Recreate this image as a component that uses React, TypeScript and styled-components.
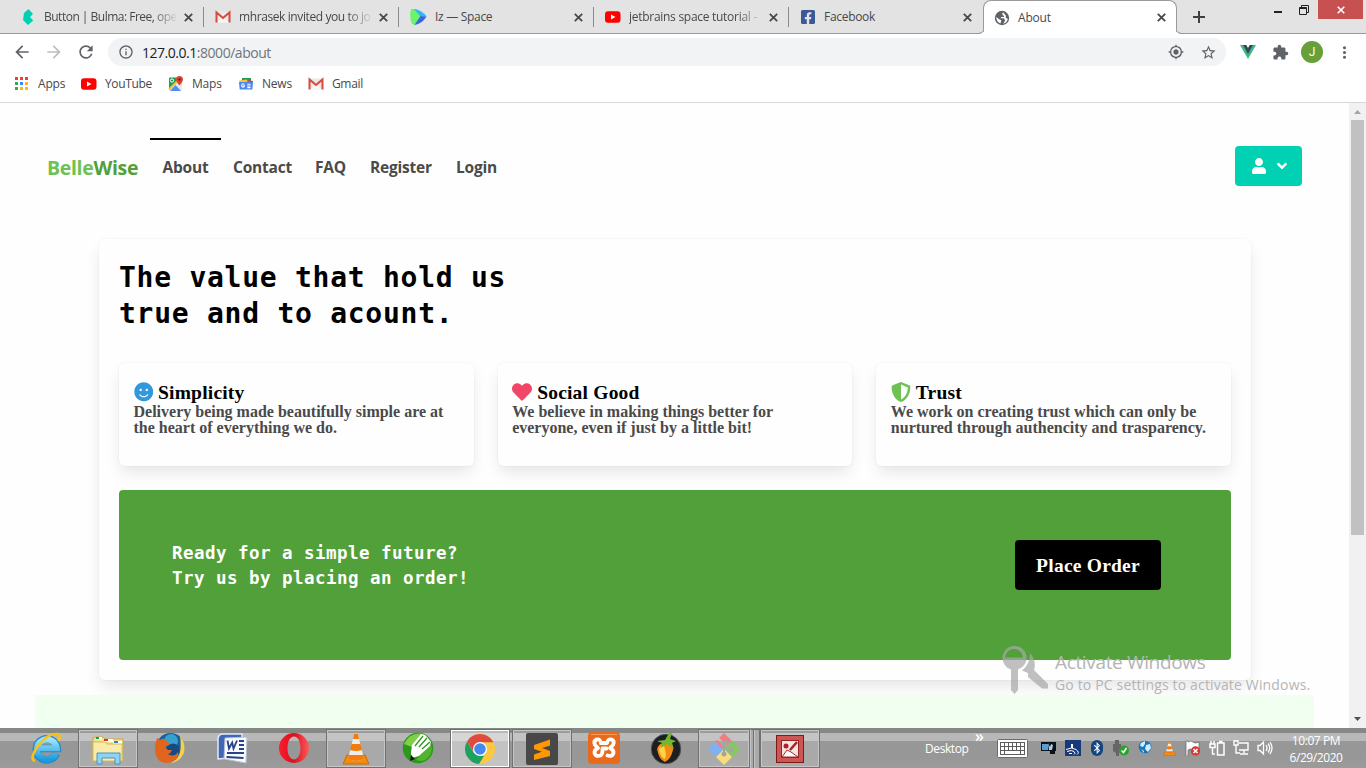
import React from "react";
import styled, { createGlobalStyle, css } from "styled-components";
import { FaUser, FaAngleDown, FaSmile, FaHeart, FaShieldAlt, FaBluetoothB, FaFacebookSquare } from "react-icons/fa";
import { MdArrowBack, MdArrowForward, MdRefresh, MdInfoOutline, MdStarBorder, MdExtension, MdMoreVert, MdMyLocation } from "react-icons/md";

const ui = `"Open Sans", "Noto Sans", sans-serif`;
const serif = `"Liberation Serif", serif`;
const mono = `"DejaVu Sans Mono", "Liberation Mono", monospace`;

const Global = createGlobalStyle`
  * { box-sizing: border-box; }
  body { margin: 0; overflow: hidden; font-family: ${ui}; }
  svg { display: block; flex: none; }
`;

const Screen = styled.div`
  position: relative;
  width: 1366px;
  height: 768px;
  display: flex;
  flex-direction: column;
  background: #fff;
  overflow: hidden;
`;

/* ---------- browser chrome ---------- */

const TabStrip = styled.div`
  height: 34px;
  display: flex;
  background: #e3e3e3;
  border-bottom: 1px solid #9a9a9a;
`;

const Tab = styled.div<{ $w: number; $pad?: number; $active?: boolean; $last?: boolean }>`
  position: relative;
  width: ${(p) => p.$w}px;
  flex: none;
  height: 34px;
  padding: 0 11px 0 ${(p) => p.$pad ?? 11}px;
  display: flex;
  align-items: center;
  gap: 8px;
  color: #45494d;
  &::after {
    content: "";
    display: ${(p) => (p.$active || p.$last ? "none" : "block")};
    position: absolute;
    right: 0;
    top: 7px;
    width: 1px;
    height: 20px;
    background: #8a8a8a;
  }
  ${(p) =>
    p.$active &&
    css`
      background: #fff;
      border: 1px solid #9a9a9a;
      border-bottom: 0;
      border-radius: 8px 8px 0 0;
      padding: 0 10px 0 10px;
      z-index: 1;
    `}
`;

const Foot = styled.i<{ $side: "left" | "right" }>`
  position: absolute;
  bottom: 0;
  ${(p) => p.$side}: -8px;
  width: 8px;
  height: 9px;
  overflow: hidden;
  &::after {
    content: "";
    position: absolute;
    bottom: 0;
    ${(p) => p.$side}: -9px;
    width: 17px;
    height: 17px;
    border-radius: 8px;
    border: 1px solid #9a9a9a;
    box-shadow: 0 0 0 6px #fff;
  }
`;

const TabTitle = styled.span<{ $fade?: boolean; $ls?: number }>`
  flex: 1;
  min-width: 0;
  white-space: nowrap;
  font-size: 12px;
  line-height: 18px;
  letter-spacing: ${(p) => p.$ls ?? -0.2}px;
  ${(p) => p.$fade && css`mask-image: linear-gradient(90deg, #000 calc(100% - 24px), rgba(0, 0, 0, 0.1));`}
`;

const NewTab = styled.div`
  width: 44px;
  display: flex;
  align-items: center;
  justify-content: center;
`;

const WindowControls = styled.div`
  margin-left: auto;
  margin-right: 3px;
  display: flex;
`;

const WinButton = styled.div<{ $w: number; $close?: boolean }>`
  width: ${(p) => p.$w}px;
  height: 19px;
  display: flex;
  align-items: center;
  justify-content: center;
  background: ${(p) => (p.$close ? "#c75050" : "transparent")};
`;

const Toolbar = styled.div`
  height: 36px;
  display: flex;
  align-items: center;
  padding: 0 9px 0 12px;
  color: #5f6368;
`;

const ToolIcon = styled.div<{ $w: number; $dim?: boolean }>`
  width: ${(p) => p.$w}px;
  flex: none;
  display: flex;
  justify-content: center;
  color: ${(p) => (p.$dim ? "#bcbec1" : "#5f6368")};
`;

const Omnibox = styled.div`
  width: 1118px;
  flex: none;
  height: 28px;
  border-radius: 14px;
  background: #f1f3f4;
  display: flex;
  align-items: center;
  padding: 0 9px 0 10px;
`;

const Url = styled.span`
  flex: 1;
  margin-left: 8px;
  font-size: 14px;
  letter-spacing: -0.47px;
  color: #70757a;
  b { font-weight: 400; color: #202124; }
`;

const Avatar = styled.div`
  width: 22px;
  height: 22px;
  flex: none;
  margin: 0 9px 0 11px;
  border-radius: 50%;
  background: #689f38;
  color: #fff;
  font: 12px/22px Roboto, sans-serif;
  text-align: center;
`;

const Bookmarks = styled.div`
  height: 33px;
  padding: 0 0 5px 15px;
  display: flex;
  align-items: center;
  border-bottom: 1px solid #d6d8da;
`;

const Bookmark = styled.div<{ $w: number; $gap: number; $ls?: number }>`
  width: ${(p) => p.$w}px;
  display: flex;
  align-items: center;
  gap: ${(p) => p.$gap}px;
  font-size: 12px;
  color: #45494d;
  letter-spacing: ${(p) => p.$ls ?? -0.2}px;
`;

/* ---------- web page ---------- */

const Viewport = styled.div`
  height: 625px;
  display: flex;
`;

const Page = styled.main`
  flex: 1;
  display: flex;
  flex-direction: column;
  background: #fefefe;
  padding: 35px 35px 0 35px;
`;

const Navbar = styled.nav`
  height: 56px;
  display: flex;
  align-items: center;
  padding: 0 12px;
`;

const Brand = styled.div`
  width: 103px;
  padding-top: 3px;
  font-size: 19.5px;
  font-weight: 700;
  letter-spacing: -0.32px;
  color: #6ec153;
  white-space: nowrap;
  span { color: #51a03a; }
`;

const NavLink = styled.a<{ $w: number; $current?: boolean }>`
  width: ${(p) => p.$w}px;
  height: 56px;
  display: flex;
  align-items: center;
  padding: ${(p) => (p.$current ? "0 0 0 12.5px" : "1px 0 0 12px")};
  border-top: ${(p) => (p.$current ? "2px solid #000" : "0")};
  font-size: 15.5px;
  font-weight: 700;
  letter-spacing: -0.22px;
  color: #4a4a4a;
  white-space: nowrap;
`;

const AccountButton = styled.button`
  margin-left: auto;
  width: 67px;
  height: 40px;
  border: 0;
  border-radius: 4px;
  background: #00d1b2;
  color: #fff;
  padding: 0 12px 0 16px;
  display: flex;
  align-items: center;
  justify-content: space-between;
`;

const raised = css`
  border-radius: 6px;
  background: #fefefe;
  box-shadow: 0 8px 16px -2px rgba(10, 10, 10, 0.1), 0 0 0 1px rgba(10, 10, 10, 0.02);
`;

const Panel = styled.section`
  ${raised}
  width: 1152px;
  height: 441px;
  flex: none;
  margin: 45px 0 0 64px;
  padding: 21px 20px 20px;
  display: flex;
  flex-direction: column;
`;

const Heading = styled.h1`
  margin: 0 0 31px;
  font: 700 28px/36px ${mono};
  letter-spacing: 0.74px;
  color: #000;
`;

const Values = styled.div`
  display: grid;
  grid-template-columns: repeat(3, 1fr);
  gap: 24px;
  margin-bottom: 24px;
`;

const ValueCard = styled.article`
  ${raised}
  height: 103px;
  padding: 19px 14.5px;
  font-family: ${serif};
`;

const ValueTitle = styled.h2<{ $tint: string }>`
  margin: 0;
  height: 22px;
  display: flex;
  align-items: center;
  gap: 5px;
  font-size: 19.5px;
  letter-spacing: 0.2px;
  color: #000;
  svg { color: ${(p) => p.$tint}; margin-top: -2px; }
`;

const ValueText = styled.p`
  margin: 0;
  font-size: 16px;
  line-height: 16px;
  font-weight: 700;
  color: #4a4a4a;
  white-space: nowrap;
`;

const Banner = styled.div`
  height: 170px;
  border-radius: 4px;
  background: #52a03a;
  padding: 50px 70px 0 53px;
  display: flex;
  justify-content: space-between;
  align-items: flex-start;
`;

const BannerText = styled.p`
  margin: 1px 0 0;
  font: 700 17.5px/25px ${mono};
  letter-spacing: 0.46px;
  color: #fff;
`;

const OrderButton = styled.button`
  width: 146px;
  height: 50px;
  border: 0;
  border-radius: 4px;
  background: #000;
  color: #fff;
  font: 700 19.5px/24px ${serif};
  letter-spacing: 0.23px;
  padding: 2px 0 0;
  white-space: nowrap;
`;

const Footer = styled.footer`
  margin-top: 15px;
  flex: 1;
  background: #f0fff0;
`;

const Scrollbar = styled.div`
  width: 17px;
  background: #f1f1f1;
  display: flex;
  flex-direction: column;
  align-items: center;
  padding: 7px 0 7px;
`;

const Thumb = styled.div`
  width: 13px;
  height: 415px;
  margin: 6px 0 auto;
  background: #c1c1c1;
`;

/* ---------- activation watermark ---------- */

const Watermark = styled.div`
  position: absolute;
  left: 1001px;
  top: 645px;
  display: flex;
  gap: 7px;
  color: rgba(168, 168, 168, 0.72);
`;

const WatermarkText = styled.div`
  padding-top: 4px;
  white-space: nowrap;
  color: #b4b4b4;
`;

const WatermarkTitle = styled.div`
  font-size: 19px;
  line-height: 26px;
  letter-spacing: -0.35px;
`;

const WatermarkLine = styled.div`
  font-size: 14px;
  line-height: 20px;
  letter-spacing: 0.16px;
`;

/* ---------- desktop taskbar ---------- */

const Taskbar = styled.div`
  height: 40px;
  display: flex;
  background: linear-gradient(#868886 0 5px, #b8b8b8 5px 13px, #989797 13px 28px, #9c9b9b 40px);
`;

const Slots = styled.div`
  display: flex;
  padding-left: 15px;
`;

const Slot = styled.div`
  width: 62px;
  height: 40px;
  display: flex;
  align-items: center;
  justify-content: center;
`;

const Running = styled.div<{ $on?: boolean; $stack?: boolean }>`
  position: relative;
  width: 60px;
  height: 39px;
  display: flex;
  align-items: center;
  justify-content: center;
  margin-top: 1px;
  border: 1px solid #70716f;
  box-shadow: inset 0 0 0 1px ${(p) => (p.$on ? "#fff" : "#c6c6c6")};
  background: ${(p) => (p.$on ? "rgba(255,255,255,.42)" : "rgba(255,255,255,.18)")};
  ${(p) =>
    p.$stack &&
    css`
      width: 52px;
      margin-right: 8px;
      &::after {
        content: "";
        position: absolute;
        left: 51px;
        top: -1px;
        width: 8px;
        height: 39px;
        border: 1px solid #70716f;
        border-left-color: #c6c6c6;
        background: linear-gradient(90deg, #aaa 0 2px, #70716f 2px 3px, #c6c6c6 3px 4px, #aaa 4px);
      }
    `}
`;

const Tray = styled.div`
  margin-left: auto;
  display: flex;
  align-items: center;
  color: #fff;
  font-size: 12px;
`;

const DesktopLabel = styled.span`
  width: 50px;
  letter-spacing: -0.4px;
`;

const Chevrons = styled.span`
  width: 22px;
  height: 38px;
  font-size: 16px;
  line-height: 14px;
  font-weight: 600;
`;

const KeyboardSlot = styled.div`
  width: 40px;
`;

const TrayIcon = styled.div`
  width: 24px;
  display: flex;
  justify-content: center;
`;

const Clock = styled.div`
  width: 89px;
  padding: 1px 11px 0 0;
  text-align: center;
  line-height: 17px;
  letter-spacing: -0.42px;
`;

/* ---------- drawings ---------- */

const Cross = ({ c = "#45494d", s = 9 }: { c?: string; s?: number }) => (
  <svg width={s} height={s} viewBox="0 0 9 9" stroke={c} strokeWidth="1.8"><path d="M.8.8 8.2 8.2M8.2.8.8 8.2" /></svg>
);

const World = () => (
  <svg width="16" height="16" viewBox="0 0 16 16">
    <circle cx="8" cy="8" r="7.200" fill="#5f6368" />
    <path fill="#fff" d="M9 2.300q-1.500 1.700-.2 2.900 1.800.3 1.200 1.800H7.300L6.500 8.200h3.300l1.400 2-2 3.600q4-1 4.600-5l-2-.8V5.500L9 2.300zM2.200 7l3.300 2.500 1.800.8-.8 3.300Q2.500 12 2.200 7z" />
  </svg>
);

const Bulma = () => (
  <svg width="16" height="16" viewBox="0 0 16 16"><path fill="#00d1b2" d="M3 11 4 4 8.500 0 13 5l-3 3 3.200 3.500L8 16z" /></svg>
);

const Gmail = () => (
  <svg width="16" height="16" viewBox="0 0 16 16">
    <path fill="#e9e9e9" d="M1 2.500h14v11H1z" />
    <path fill="#f7f7f7" d="M2 13.500 8 8l6 5.500z" />
    <path fill="none" stroke="#d54b3d" strokeWidth="2" d="M1.500 13.500v-10L8 9l6.500-5.500v10" />
  </svg>
);

const SpaceLogo = () => (
  <svg width="17" height="16" viewBox="0 0 17 16">
    <path fill="#6bf36b" d="M1 0h5l5 7-6 9-3-1Q-1 8 1 0z" />
    <path fill="#2fb7f5" d="M4 0q8 1 12.500 7.500L10 7z" />
    <path fill="#3568e0" d="M16.500 7.500Q12 15 4.500 16l6-9z" />
  </svg>
);

const YouTube = () => (
  <svg width="16" height="16" viewBox="0 0 16 16"><rect y="2.300" width="15.500" height="11.400" rx="3" fill="#f00" /><path fill="#fff" d="m6 5.500 4.500 2.500L6 10.500z" /></svg>
);

const AppsGrid = () => (
  <svg width="14" height="14" viewBox="0 0 14 14">
    {["#ea4335", "#ea4335", "#ea4335", "#34a853", "#4285f4", "#fbbc05", "#34a853", "#fbbc05", "#fbbc05"].map((c, i) => (
      <rect key={i} x={(i % 3) * 5} y={Math.floor(i / 3) * 5} width="3" height="3" fill={c} />
    ))}
  </svg>
);

const MapsLogo = () => (
  <svg width="16" height="16" viewBox="0 0 16 16">
    <rect x="1" y="1.500" width="13" height="13" rx="1" fill="#e8e8e8" />
    <path fill="#1e9e57" d="M1 2.500q0-1 1-1h8L8 7l-7 7z" />
    <path fill="#4f8ff7" d="m2 15 5.500-6 5.500 6z" />
    <path stroke="#fbc02d" strokeWidth="2" d="m1 13.500 9-9" />
    <circle cx="4" cy="4.500" r="1.600" fill="none" stroke="#fff" />
    <path fill="#dc4437" d="M11.500 9.500Q8 5.500 8 3.500a3.400 3.400 0 0 1 7 0q0 2-3.500 6z" />
    <circle cx="11.500" cy="3.500" r="1.200" fill="#7b1c14" />
  </svg>
);

const NewsLogo = () => (
  <svg width="16" height="16" viewBox="0 0 16 16">
    <path fill="#1e9e57" d="M4 2h9v4H4z" /><path fill="#fbc02d" d="m1 4.500 8-1 1 3H2z" /><path fill="#ea4335" d="m15 5-5-1-1 3h6z" />
    <path fill="#4a86f0" d="M1 6h14l-.7 7.500H1.700z" />
    <path fill="none" stroke="#fff" strokeWidth="1.100" d="M6.500 8.400Q5 7.200 4 8.500q-1 1.700.7 2.600 1.800 0 1.800-1.400H5.200M9.200 8.300h3.300M9.200 10h3.300M9.200 11.600h3.300" />
  </svg>
);

const Vue = () => (
  <svg width="16" height="14" viewBox="0 0 16 14"><path fill="#41b883" d="M0 0h16L8 14z" /><path fill="#35495e" d="M3 0h10L8 9z" /><path fill="#fff" d="M6.300 0h3.400L8 3z" /></svg>
);

const Keys = () => (
  <svg width="47" height="50" viewBox="0 0 47 50" fill="currentColor">
    <path fillRule="evenodd" d="M13 1a12 12 0 0 1 4 23.500V45l-3.500 4-3.500-4V24.500A12 12 0 0 1 13 1zm0 3a9 9 0 0 0-9 8.500h18A9 9 0 0 0 13 4z" />
    <path d="M29 8q7 8 4 17l14 14v4.500h-6L27 32v-4l-6-2.500q8-6 8-17.500z" />
  </svg>
);

const Ie = () => (
  <svg width="32" height="32" viewBox="0 0 32 32">
    <defs><linearGradient id="ie" x2="0" y2="1"><stop stopColor="#9be5fb" /><stop offset="1" stopColor="#1d9be0" /></linearGradient></defs>
    <path fill="none" stroke="#2786c4" strokeWidth="7.500" d="M26.500 21.500a10.500 10.500 0 1 1 .8-5H9" />
    <path fill="none" stroke="url(#ie)" strokeWidth="6" d="M26 21.500a10 10 0 1 1 .8-5.200L8 16" />
    <path fill="none" stroke="#f7c21c" strokeWidth="2.600" d="M5 29Q-1 27 8 14T28 2q3 1 .5 7" />
  </svg>
);

const Explorer = () => (
  <svg width="34" height="32" viewBox="0 0 34 32">
    <path fill="#f3e08c" stroke="#c9a848" d="M4 4h8l2 2h18v22H2V5z" />
    <path fill="#fff" d="M5 4h6v3H5zM13 6h9v3h-9zM22 8h9v3h-9z" />
    <path fill="#12a537" d="M5 4h3v2H5z" /><path fill="#d43b2a" d="M13 6h4v2h-4z" /><path fill="#2387d9" d="M23 8h4v2h-4z" />
    <path fill="#f9ebaa" stroke="#d6b95d" d="M2 9h12l2 2h15v17H2z" />
    <path fill="#8fd3f3" stroke="#4696c4" d="M6 31V20h23v11h-5v-6H11v6z" />
  </svg>
);

const Firefox = () => (
  <svg width="32" height="32" viewBox="0 0 32 32">
    <circle cx="16.500" cy="15" r="14" fill="#1d5f9e" /><circle cx="17" cy="9" r="7" fill="#34a1cf" />
    <path fill="#174a84" d="M13 14q6-5 12 0 2 8-5 12l-7-4z" />
    <path fill="#f8cf4a" d="M26 4q7 8 3.500 18-4 8-12.500 9 9-5 9.500-14 .5-7-.5-13z" />
    <path fill="#e2651d" d="M3 6q2 1 3 2 3-2 6-1 0 3 4 4-1 3-4 3-1 2 2 4l4 0q-1 3-4 4 6 4 10-2 1 5-3 8-4 3-8 3Q2 31 1 18q0-7 2-12z" />
  </svg>
);

const Word = () => (
  <svg width="34" height="32" viewBox="0 0 34 32">
    <path fill="#3f67b5" stroke="#dfe9fa" strokeWidth="1.500" d="M3 27V6q1-4 5-4h19v5H14v19z" />
    <path fill="#fafafa" stroke="#b5bfd1" d="m10 6 22-1-1 26-22-4z" />
    <path fill="none" stroke="#26428b" strokeWidth="1.800" d="m12.500 8.500 1.500 8 3.200-6 1.300 6 3.500-8" />
    <path stroke="#26428b" strokeWidth="1.800" d="M24 9h5M24 13h5M24 17h5M12 21h17M11.500 25l17 1" />
  </svg>
);

const Opera = () => (
  <svg width="32" height="32" viewBox="0 0 32 32">
    <defs><linearGradient id="op"><stop stopColor="#ff1b2d" /><stop offset=".5" stopColor="#d9101f" /><stop offset="1" stopColor="#ff5a5a" /></linearGradient></defs>
    <path fill="url(#op)" fillRule="evenodd" d="M16 1a15 15 0 1 1 0 30 15 15 0 0 1 0-30zm0 3.500c-4 0-6.500 5-6.500 11.500S12 27.500 16 27.500 22.500 22.500 22.500 16 20 4.500 16 4.500z" />
  </svg>
);

const Cone = ({ s = 32 }: { s?: number }) => (
  <svg width={s} height={s} viewBox="0 0 32 32">
    <path fill="#f58a0b" stroke="#c96a08" d="M7 22h18l4 9H3z" />
    <path fill="#ededed" d="M14 2h4l6 24q-8 4-16 0z" />
    <path fill="#f27d0c" d="M14 1h4l1 5h-6zM11.500 11h9l1.600 6q-6 2-12.200 0zM8.800 22h14.400l1 4q-8 4-16.400 0z" />
  </svg>
);

const Corel = () => (
  <svg width="32" height="32" viewBox="0 0 32 32">
    <circle cx="16" cy="16" r="15.300" fill="#2b9a1c" /><path fill="#7fcf48" d="M2 12Q8-1 22 2L10 15z" /><path fill="#4fb52c" d="m14 28 15-16q3 10-6 16-4 2-9 0z" />
    <path fill="#fff" d="m10 13 9-11 4 1 3 3 3 4-1 4-11 10-7 2-1-5z" />
    <path fill="none" stroke="#2b9a1c" strokeWidth="1.300" d="m13 14 8-10M17 15l8-9M20 17l8-7" />
    <path fill="#111" d="m9 23 4 4-5 2z" />
  </svg>
);

const Chrome = () => (
  <svg width="32" height="32" viewBox="0 0 32 32">
    <circle cx="16" cy="16" r="15" fill="#fbc843" />
    <path fill="#1ca160" d="M3 8.500 10 20l6 3h4l-5 8A15 15 0 0 1 3 8.500z" />
    <path fill="#de4b41" d="M3 8.500a15 15 0 0 1 26 0l.3.700H16l-6.500 9.300z" />
    <circle cx="16" cy="16" r="7" fill="#fff" /><circle cx="16" cy="16" r="5.800" fill="#4587f3" />
  </svg>
);

const Sublime = () => (
  <svg width="32" height="32" viewBox="0 0 32 32">
    <rect width="32" height="32" rx="2" fill="#484848" />
    <path fill="#ff9800" d="m8 12 16-5.500v6L16 15l8 3v5L8 27v-5.500l8-2.800L8 16z" />
  </svg>
);

const Xampp = () => (
  <svg width="32" height="32" viewBox="0 0 32 32">
    <rect width="32" height="32" rx="4" fill="#e96a1d" /><path stroke="#f49a5c" d="M3 2.500h26" />
    <g fill="none" stroke="#fff" strokeWidth="3.800" strokeLinecap="round" strokeLinejoin="round">
      <path d="M13 11Q12 6.500 8.500 7.500 5 9.500 7 13l3 3q-4 2-3.500 5 1 4 6 2.500 2-1.500 2-5v-2h4" />
      <path d="M13 11h6q1-4.500 4.500-3.500Q27 9.500 25 13l-3 3q4 2 3.500 5-1 4-6 2.500" />
    </g>
  </svg>
);

const Fruity = () => (
  <svg width="32" height="34" viewBox="0 0 32 34">
    <circle cx="16" cy="18" r="14.800" fill="#1c1f22" stroke="#50565b" />
    <path fill="#f58a16" d="M7 18q2-7 9-6 8-1 7 7-2 9-8 12-6-2-8-13z" /><path fill="#ffd24a" d="M9 18q2-4 5-3 3 8 1 13-5-2-6-10z" />
    <path fill="#74b72c" d="m7 10 8-1 4-7h3l-2 6 6 2-4 2 2 6-7-5-6 4 1-5z" />
  </svg>
);

const GitWin = () => (
  <svg width="32" height="32" viewBox="0 0 32 32">
    <path fill="#f07e7e" d="m16 0 8 8-5 4-8-7z" /><path fill="#f07e7e" d="m9 7 7 7-2 1-7-7z" />
    <path fill="#7fb0f4" d="m7 9 8 8-7 7-8-8z" /><path fill="#f8dd7c" d="m16 16 8 8-8 8-8-8z" />
    <path fill="#82ca5f" d="m25 8 7 8-7 8-8-8z" />
    <g fill="#a3a5a3"><circle cx="19" cy="9" r="2" /><circle cx="16" cy="21" r="2.500" /><circle cx="23" cy="17" r="2.500" /><path d="M15 9h2v12h-2z" /></g>
  </svg>
);

const PaintTool = () => (
  <svg width="28" height="28" viewBox="0 0 28 28">
    <rect x=".5" y=".5" width="27" height="27" fill="#cb5654" stroke="#7e1918" />
    <rect x="5.500" y="5.500" width="17" height="17" fill="#f7e3e1" stroke="#972423" />
    <circle cx="10" cy="11" r="2.500" fill="#a52725" /><path fill="#fff" stroke="#a52725" d="m6 22 5-7 4 2 7 5z" />
    <path stroke="#a52725" strokeWidth="2.500" d="m14 15 7-8" />
  </svg>
);

const Keyboard = () => (
  <svg width="31" height="19" viewBox="0 0 31 19">
    <rect x=".5" y=".5" width="30" height="18" rx="1" fill="#fff" stroke="#6c6c6c" />
    <path fill="#5c5c5c" d="M3 3h25v13H3z" />
    <path stroke="#fff" strokeWidth="3" strokeDasharray="3 1" d="M4 5.500h23M4 9.500h23" />
    <path stroke="#fff" strokeWidth="3" d="M4 13.500h3M8 13.500h15M24 13.500h3" />
  </svg>
);

const Monitor = () => (
  <svg width="16" height="16" viewBox="0 0 16 16"><path fill="#0c1117" d="M0 2h15v9H0zM9 11h5v3H9z" /><path fill="#4f9fd8" d="M1 4h6v6H1z" /><path fill="#9fd2f2" d="m7 3 2 4 1-3 2 1-1 5H8z" /></svg>
);
const Signal = () => (
  <svg width="16" height="16" viewBox="0 0 16 16"><path fill="#173a7a" d="M0 0h16v16H0z" /><path fill="#fff" d="M6 4h2v4H6z" /><g fill="none" stroke="#fff"><path d="M1 9.500q6-3 10 0t1 5M2 11.500q5-2 7 0t0 3M4 13.500h3" /></g></svg>
);
const BluetoothOval = styled.span`
  width: 12px;
  height: 16px;
  border-radius: 6px;
  background: #15457f;
  display: flex;
  align-items: center;
  justify-content: center;
`;
const Usb = () => (
  <svg width="16" height="16" viewBox="0 0 16 16"><path fill="#666" d="M2 0h4v4h2v7l-2 2v3H3v-3l-3-2V4h2z" /><circle cx="11" cy="10.500" r="5" fill="#28a32b" /><path fill="none" stroke="#fff" strokeWidth="1.500" d="m8.500 10.500 2 2 3-4.500" /></svg>
);
const Globe = () => (
  <svg width="14" height="16" viewBox="0 0 14 16"><circle cx="7" cy="7" r="6.300" fill="#1776bd" /><path fill="#d6ecf8" d="m3 3 4-2v3l-2 3-3-1zM8 5l4-1 1 4-3 4-3-3zM3 9l3 2v2z" /></svg>
);
const Flag = () => (
  <svg width="16" height="16" viewBox="0 0 16 16"><path fill="#fff" stroke="#666" strokeWidth=".7" d="M1 1h2v1q3-2 5 0t6 0v8H8Q5 8 3 10v6H1z" /><circle cx="10.500" cy="11" r="4.700" fill="#d83935" /><path stroke="#fff" strokeWidth="1.600" d="m8.500 9 4 4m0-4-4 4" /></svg>
);
const Battery = () => (
  <svg width="16" height="16" viewBox="0 0 16 16" fill="none" stroke="#fff" strokeWidth="1.500"><path d="M2 1v3M5 1v3M1 4h5v3.500H1zM3.500 7.500V14H6M8.500 3H15v12H8.500zM10 1.500h3.500" /></svg>
);
const Network = () => (
  <svg width="16" height="16" viewBox="0 0 16 16" fill="none" stroke="#fff" strokeWidth="1.400"><path d="M6 3h9v7H6M11 10v3M7 14h8M1 1h4v4H1zM3 5v8h4" /></svg>
);
const Speaker = () => (
  <svg width="16" height="16" viewBox="0 0 16 16" fill="none" stroke="#fff" strokeWidth="1.300"><path d="M1 5.500h2L6.500 2v12L3 10.500H1zM9 5q2 3 0 6M11 3.500q3.500 4.500 0 9M13 2q4 6 0 12" /></svg>
);

const Arrow = ({ up }: { up?: boolean }) => (
  <svg width="7" height="4" viewBox="0 0 7 4"><path fill={up ? "#a3a3a3" : "#505050"} d={up ? "M3.500 0 7 4H0z" : "M3.500 4 7 0H0z"} /></svg>
);

const App = () => (
  <Screen>
    <Global />
    <TabStrip>
      <Tab $w={204} $pad={20}><Bulma /><TabTitle $fade $ls={-0.5}>Button | Bulma: Free, ope</TabTitle><Cross /></Tab>
      <Tab $w={195}><Gmail /><TabTitle $fade $ls={-0.4}>mhrasek invited you to jo</TabTitle><Cross /></Tab>
      <Tab $w={195}><SpaceLogo /><TabTitle $ls={-0.3}>Iz — Space</TabTitle><Cross /></Tab>
      <Tab $w={195}><YouTube /><TabTitle $fade $ls={-0.28}>jetbrains space tutorial -</TabTitle><Cross /></Tab>
      <Tab $w={194} $last><FaFacebookSquare size={16} color="#3b5998" /><TabTitle $ls={-0.3}>Facebook</TabTitle><Cross /></Tab>
      <Tab $w={194} $active><Foot $side="left" /><World /><TabTitle>About</TabTitle><Cross /><Foot $side="right" /></Tab>
      <NewTab><svg width="12" height="12" viewBox="0 0 12 12" stroke="#3c4043" strokeWidth="2"><path d="M6 0v12M0 6h12" /></svg></NewTab>
      <WindowControls>
        <WinButton $w={24}><svg width="8" height="10" viewBox="0 0 8 10"><path fill="#222" d="M0 6h8v2H0z" /></svg></WinButton>
        <WinButton $w={28}><svg width="10" height="10" viewBox="0 0 10 10" fill="none" stroke="#222"><path d="M2.500 2.500V.5h7v7h-2M.5 2.500h7v7h-7zM.5 3.500h7" /></svg></WinButton>
        <WinButton $w={45} $close><Cross c="#fff" s={8} /></WinButton>
      </WindowControls>
    </TabStrip>
    <Toolbar>
      <ToolIcon $w={20}><MdArrowBack size={20} /></ToolIcon>
      <ToolIcon $w={44} $dim><MdArrowForward size={20} /></ToolIcon>
      <ToolIcon $w={20}><MdRefresh size={20} /></ToolIcon>
      <ToolIcon $w={12} />
      <Omnibox>
        <MdInfoOutline size={16} />
        <Url><b>127.0.0.1</b>:8000/about</Url>
        <MdMyLocation size={16} />
        <ToolIcon $w={16} />
        <MdStarBorder size={17} />
      </Omnibox>
      <ToolIcon $w={44}><Vue /></ToolIcon>
      <ToolIcon $w={20}><MdExtension size={17} /></ToolIcon>
      <Avatar>J</Avatar>
      <ToolIcon $w={24}><MdMoreVert size={19} /></ToolIcon>
    </Toolbar>
    <Bookmarks>
      <Bookmark $w={66} $gap={9}><AppsGrid />Apps</Bookmark>
      <Bookmark $w={87} $gap={8} $ls={-0.35}><YouTube />YouTube</Bookmark>
      <Bookmark $w={70} $gap={8}><MapsLogo />Maps</Bookmark>
      <Bookmark $w={70} $gap={8}><NewsLogo />News</Bookmark>
      <Bookmark $w={70} $gap={8} $ls={-0.35}><Gmail />Gmail</Bookmark>
    </Bookmarks>

    <Viewport>
      <Page>
        <Navbar>
          <Brand>Belle<span>Wise</span></Brand>
          <NavLink $w={71} $current>About</NavLink>
          <NavLink $w={82}>Contact</NavLink>
          <NavLink $w={55}>FAQ</NavLink>
          <NavLink $w={86}>Register</NavLink>
          <NavLink $w={66}>Login</NavLink>
          <AccountButton><FaUser size={16} /><FaAngleDown size={16} /></AccountButton>
        </Navbar>
        <Panel>
          <Heading>The value that hold us<br />true and to acount.</Heading>
          <Values>
            <ValueCard>
              <ValueTitle $tint="#3298dc"><FaSmile size={19.500} />Simplicity</ValueTitle>
              <ValueText>Delivery being made beautifully simple are at<br />the heart of everything we do.</ValueText>
            </ValueCard>
            <ValueCard>
              <ValueTitle $tint="#f14668"><FaHeart size={20} />Social Good</ValueTitle>
              <ValueText>We believe in making things better for<br />everyone, even if just by a little bit!</ValueText>
            </ValueCard>
            <ValueCard>
              <ValueTitle $tint="#6ec153"><FaShieldAlt size={20} />Trust</ValueTitle>
              <ValueText>We work on creating trust which can only be<br />nurtured through authencity and trasparency.</ValueText>
            </ValueCard>
          </Values>
          <Banner>
            <BannerText>Ready for a simple future?<br />Try us by placing an order!</BannerText>
            <OrderButton>Place Order</OrderButton>
          </Banner>
        </Panel>
        <Footer />
      </Page>
      <Scrollbar><Arrow up /><Thumb /><Arrow /></Scrollbar>
    </Viewport>

    <Taskbar>
      <Slots>
        <Slot><Ie /></Slot>
        <Slot><Running><Explorer /></Running></Slot>
        <Slot><Firefox /></Slot>
        <Slot><Word /></Slot>
        <Slot><Opera /></Slot>
        <Slot><Running><Cone /></Running></Slot>
        <Slot><Corel /></Slot>
        <Slot><Running $on><Chrome /></Running></Slot>
        <Slot><Running><Sublime /></Running></Slot>
        <Slot><Xampp /></Slot>
        <Slot><Fruity /></Slot>
        <Slot><Running $stack><GitWin /></Running></Slot>
        <Slot><Running><PaintTool /></Running></Slot>
      </Slots>
      <Tray>
        <DesktopLabel>Desktop</DesktopLabel>
        <Chevrons>»</Chevrons>
        <KeyboardSlot><Keyboard /></KeyboardSlot>
        <TrayIcon><Monitor /></TrayIcon>
        <TrayIcon><Signal /></TrayIcon>
        <TrayIcon><BluetoothOval><FaBluetoothB size={12} /></BluetoothOval></TrayIcon>
        <TrayIcon><Usb /></TrayIcon>
        <TrayIcon><Globe /></TrayIcon>
        <TrayIcon><Cone s={15} /></TrayIcon>
        <TrayIcon><Flag /></TrayIcon>
        <TrayIcon><Battery /></TrayIcon>
        <TrayIcon><Network /></TrayIcon>
        <TrayIcon><Speaker /></TrayIcon>
        <Clock>10:07 PM<br />6/29/2020</Clock>
      </Tray>
    </Taskbar>

    <Watermark>
      <Keys />
      <WatermarkText>
        <WatermarkTitle>Activate Windows</WatermarkTitle>
        <WatermarkLine>Go to PC settings to activate Windows.</WatermarkLine>
      </WatermarkText>
    </Watermark>
  </Screen>
);

export default App;
